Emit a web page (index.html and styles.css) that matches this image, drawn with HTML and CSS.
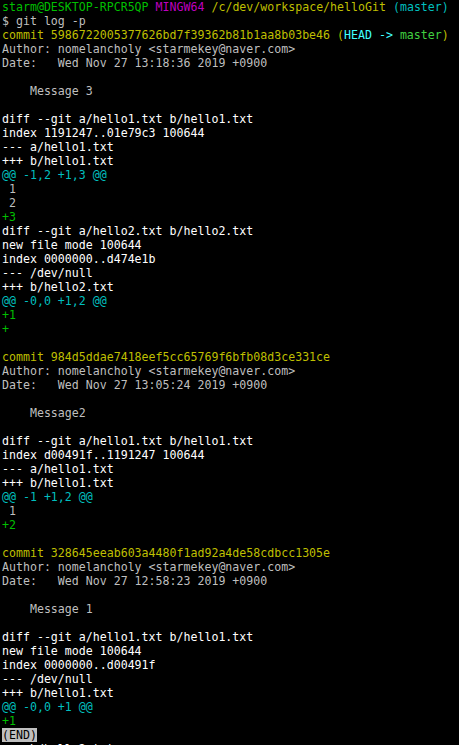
FILE: index.html
```html
<!DOCTYPE html>
<html>
<head>
<meta charset="utf-8">
<link rel="stylesheet" href="styles.css">
</head>
<body>
<pre class="term"><span class="g">starm@DESKTOP-RPCR5QP</span> <span class="m">MINGW64</span> <span class="y">/c/dev/workspace/helloGit</span> <span class="c">(master)</span>
$ git log -p
<span class="y">commit 5986722005377626bd7f39362b81b1aa8b03be46 (</span><span class="bc">HEAD -&gt; </span><span class="bg">master</span><span class="y">)</span>
Author: nomelancholy &lt;starmekey@naver.com&gt;
Date:   Wed Nov 27 13:18:36 2019 +0900

    Message 3

<span class="w">diff --git a/hello1.txt b/hello1.txt</span>
<span class="w">index 1191247..01e79c3 100644</span>
<span class="w">--- a/hello1.txt</span>
<span class="w">+++ b/hello1.txt</span>
<span class="c">@@ -1,2 +1,3 @@</span>
 1
 2
<span class="g">+3</span>
<span class="w">diff --git a/hello2.txt b/hello2.txt</span>
<span class="w">new file mode 100644</span>
<span class="w">index 0000000..d474e1b</span>
<span class="w">--- /dev/null</span>
<span class="w">+++ b/hello2.txt</span>
<span class="c">@@ -0,0 +1,2 @@</span>
<span class="g">+1</span>
<span class="g">+</span>

<span class="y">commit 984d5ddae7418eef5cc65769f6bfb08d3ce331ce</span>
Author: nomelancholy &lt;starmekey@naver.com&gt;
Date:   Wed Nov 27 13:05:24 2019 +0900

    Message2

<span class="w">diff --git a/hello1.txt b/hello1.txt</span>
<span class="w">index d00491f..1191247 100644</span>
<span class="w">--- a/hello1.txt</span>
<span class="w">+++ b/hello1.txt</span>
<span class="c">@@ -1 +1,2 @@</span>
 1
<span class="g">+2</span>

<span class="y">commit 328645eeab603a4480f1ad92a4de58cdbcc1305e</span>
Author: nomelancholy &lt;starmekey@naver.com&gt;
Date:   Wed Nov 27 12:58:23 2019 +0900

    Message 1

<span class="w">diff --git a/hello1.txt b/hello1.txt</span>
<span class="w">new file mode 100644</span>
<span class="w">index 0000000..d00491f</span>
<span class="w">--- /dev/null</span>
<span class="w">+++ b/hello1.txt</span>
<span class="c">@@ -0,0 +1 @@</span>
<span class="g">+1</span>
<span class="end">(END)</span>
<span class="w">+++ b/hello2.txt</span></pre>
</body>
</html>
```
FILE: styles.css
```css
html, body {
  margin: 0;
  padding: 0;
  background: #000000;
  height: 100%;
  overflow: hidden;
}

.term {
  margin: 0;
  padding: 0 0 0 2px;
  font-family: "DejaVu Sans Mono", "Liberation Mono", monospace;
  font-size: 11.6px;
  line-height: 14px;
  color: #bfbfbf;
  white-space: pre;
}

.g { color: #00bf00; }
.m { color: #bf00bf; }
.y { color: #bfbf00; }
.c { color: #00bfbf; }
.bc { color: #40ffff; }
.bg { color: #40d040; }
.w { color: #ffffff; }
.end {
  background: #bfbfbf;
  color: #000000;
}
```
